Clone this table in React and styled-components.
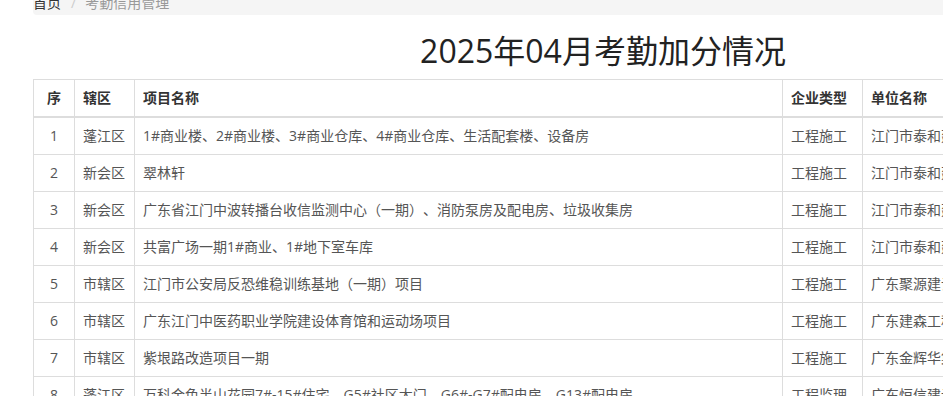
import styled, { createGlobalStyle } from 'styled-components'

const GlobalStyle = createGlobalStyle`
    html, body {
        margin: 0;
        padding: 0;
        background: #fff;
        overflow: hidden;
    }
    body {
        font-family: "Open Sans", "Noto Sans CJK SC", sans-serif;
        font-size: 14px;
        color: #333;
        text-spacing-trim: space-all;
    }
`

const rows = [
    ['1', '蓬江区', '1#商业楼、2#商业楼、3#商业仓库、4#商业仓库、生活配套楼、设备房', '工程施工', '江门市泰和建筑工程有限公司'],
    ['2', '新会区', '翠林轩', '工程施工', '江门市泰和建筑工程有限公司'],
    ['3', '新会区', '广东省江门中波转播台收信监测中心（一期）、消防泵房及配电房、垃圾收集房', '工程施工', '江门市泰和建筑工程有限公司'],
    ['4', '新会区', '共富广场一期1#商业、1#地下室车库', '工程施工', '江门市泰和建筑工程有限公司'],
    ['5', '市辖区', '江门市公安局反恐维稳训练基地（一期）项目', '工程施工', '广东聚源建设工程有限公司'],
    ['6', '市辖区', '广东江门中医药职业学院建设体育馆和运动场项目', '工程施工', '广东建森工程有限公司'],
    ['7', '市辖区', '紫垠路改造项目一期', '工程施工', '广东金辉华集团有限公司'],
    ['8', '蓬江区', '万科金色半山花园7#-15#住宅、G5#社区大门、G6#-G7#配电房、G13#配电房', '工程监理', '广东恒信建设工程监理有限公司'],
]

const columns = [
    { title: '序', width: 41, center: true },
    { title: '辖区', width: 60 },
    { title: '项目名称', width: 648 },
    { title: '企业类型', width: 80 },
    { title: '单位名称', width: 311 },
]

export default function App() {
    return (
        <>
            <GlobalStyle />
            <Page>
                <Breadcrumb>
                    <Crumb>首页</Crumb>
                    <Divider>/</Divider>
                    <Crumb active>考勤信用管理</Crumb>
                </Breadcrumb>
                <Title>2025年04月考勤加分情况</Title>
                <Table>
                    <colgroup>
                        {columns.map(col => <Col key={col.title} width={col.width} />)}
                    </colgroup>
                    <thead>
                        <tr>
                            {columns.map(col => (
                                <Th key={col.title} center={col.center}>{col.title}</Th>
                            ))}
                        </tr>
                    </thead>
                    <tbody>
                        {rows.map(row => (
                            <tr key={row[0]}>
                                {row.map((cell, i) => (
                                    <Td key={i} center={columns[i].center}>{cell}</Td>
                                ))}
                            </tr>
                        ))}
                    </tbody>
                </Table>
            </Page>
        </>
    )
}

const Page = styled.div`
    width: 1140px;
    padding-left: 33px;
`

const Breadcrumb = styled.div`
    margin-top: -7px;
    padding: 0 0 2px;
    line-height: 20px;
    background: #f5f5f5;
    border-radius: 4px;
    display: flex;
    align-items: center;
`

const Crumb = styled.span`
    color: ${({ active }) => active ? '#999' : '#333'};
`

const Divider = styled.span`
    color: #ccc;
    padding: 0 9px 0 10px;
`

const Title = styled.h2`
    margin: 0;
    padding-top: 14px;
    height: 64px;
    box-sizing: border-box;
    text-align: center;
    font-size: 32px;
    font-weight: 400;
    line-height: 44px;
    color: #222;
`

const Table = styled.table`
    width: 1140px;
    table-layout: fixed;
    border-collapse: collapse;
    border: 1px solid #ddd;
`

const Col = styled.col`
    width: ${({ width }) => width}px;
`

const Th = styled.th`
    padding: 8px;
    line-height: 20px;
    text-align: ${({ center }) => center ? 'center' : 'left'};
    font-weight: 700;
    color: #333;
    border: 1px solid #ddd;
    border-bottom-width: 2px;
    white-space: nowrap;
    overflow: hidden;
`

const Td = styled.td`
    padding: 8px;
    line-height: 20px;
    text-align: ${({ center }) => center ? 'center' : 'left'};
    color: #555;
    border: 1px solid #ddd;
    white-space: nowrap;
    overflow: hidden;
`
